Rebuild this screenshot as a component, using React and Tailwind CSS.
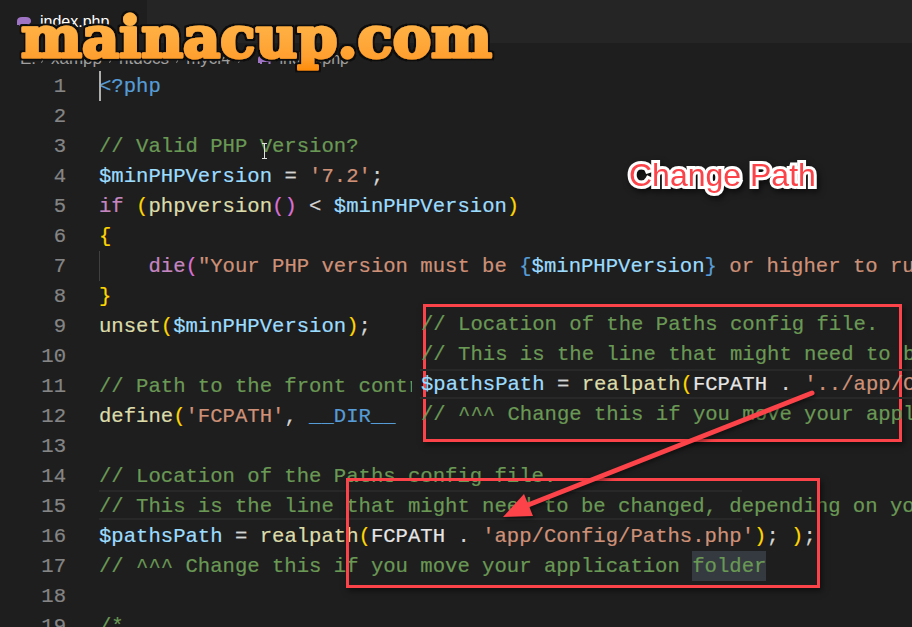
import { ChevronRight } from 'lucide-react';

const COMMENT = 'text-[#6a9955]';
const VAR = 'text-[#9cdcfe]';
const FN = 'text-[#dcdcaa]';
const STR = 'text-[#ce9178]';
const PLAIN = 'text-[#d4d4d4]';
const GOLD = 'text-[#ffd700]';
const ORCHID = 'text-[#da70d6]';
const TAG = 'text-[#569cd6]';
const KEY = 'text-[#c586c0]';
const CONST = 'text-[#e6e6e6]';

const lines = [
  [['<?php', TAG]],
  [],
  [['// Valid PHP Version?', COMMENT]],
  [['$minPHPVersion', VAR], [' = ', PLAIN], ["'7.2'", STR], [';', PLAIN]],
  [['if', KEY], [' ', PLAIN], ['(', GOLD], ['phpversion', FN], ['()', ORCHID], [' < ', PLAIN], ['$minPHPVersion', VAR], [')', GOLD]],
  [['{', GOLD]],
  [['    ', PLAIN], ['die', KEY], ['(', ORCHID], ['"Your PHP version must be ', STR], ['{', TAG], ['$minPHPVersion', VAR], ['}', TAG], [' or higher to run', STR]],
  [['}', GOLD]],
  [['unset', FN], ['(', GOLD], ['$minPHPVersion', VAR], [')', GOLD], [';', PLAIN]],
  [],
  [['// Path to the front controller', COMMENT]],
  [['define', FN], ['(', GOLD], ["'FCPATH'", STR], [', ', PLAIN], ['__DIR__', TAG]],
  [],
  [['// Location of the Paths config file.', COMMENT]],
  [['// This is the line that might need to be changed, depending on your', COMMENT]],
  [['$pathsPath', VAR], [' = ', PLAIN], ['realpath', FN], ['(', GOLD], ['FCPATH', CONST], [' . ', PLAIN], ["'app/Config/Paths.php'", STR], [')', GOLD], ['; ', PLAIN], [')', GOLD], [';', PLAIN]],
  [['// ^^^ Change this if you move your application ', COMMENT], ['folder', `${COMMENT} inline-block h-[30px] bg-[#343a40]`]],
  [],
  [['/*', COMMENT]],
];

const pasted = [
  [['// Location of the Paths config file.', COMMENT]],
  [['// This is the line that might need to be changed', COMMENT]],
  [['$pathsPath', VAR], [' = ', PLAIN], ['realpath', FN], ['(', GOLD], ['FCPATH', CONST], [' . ', PLAIN], ["'../app/Config", STR]],
  [['// ^^^ Change this if you move your application', COMMENT]],
];

function Code({ parts }) {
  return (
    <span className="whitespace-pre">
      {parts.map(([text, color], i) => (
        <span key={i} className={color}>{text}</span>
      ))}
    </span>
  );
}

function ElephantIcon({ className }) {
  return (
    <svg viewBox="0 0 16 11" className={className} fill="#a074c4">
      <path d="M1 9V5C1 2.500 3 1 6 1h4c3 0 5 1.500 5 4 0 1.500-.6 2.500-1.500 2.500V10h-2V8H5v2H3V9z" />
    </svg>
  );
}

function Crumb() {
  return <ChevronRight className="w-[7px] h-[14px] shrink-0 text-[#a0a0a0]" preserveAspectRatio="none" />;
}

function Logo() {
  return (
    <svg viewBox="0 0 500 80" className="absolute left-0 top-0 w-[500px] h-[80px]">
      <defs>
        <linearGradient id="logoFill" gradientUnits="userSpaceOnUse" x1="0" y1="22" x2="0" y2="72">
          <stop offset="0" stopColor="#ffb347" />
          <stop offset="0.7" stopColor="#ffa030" />
          <stop offset="1" stopColor="#ff8a08" />
        </linearGradient>
        <filter id="logoOutline" x="-5%" y="-20%" width="110%" height="140%">
          <feMorphology in="SourceAlpha" operator="dilate" radius="2.2" result="fat" />
          <feFlood floodColor="#111111" />
          <feComposite in2="fat" operator="in" result="edge" />
          <feMerge>
            <feMergeNode in="edge" />
            <feMergeNode in="SourceGraphic" />
          </feMerge>
        </filter>
      </defs>
      <text
        x="21"
        y="57"
        textLength="471"
        lengthAdjust="spacingAndGlyphs"
        fill="url(#logoFill)"
        stroke="url(#logoFill)"
        strokeWidth="3"
        strokeLinejoin="round"
        filter="url(#logoOutline)"
        fontFamily="'DejaVu Serif', serif"
        fontWeight="900"
        fontSize="56"
      >
        mainacup.com
      </text>
    </svg>
  );
}

export default function App() {
  return (
    <div className="relative w-[912px] h-[627px] overflow-hidden bg-[#1e1e1e] font-['Liberation_Mono',monospace]">
      {/* Tab bar */}
      <div className="flex h-[43px] bg-[#252526]">
        <div className="flex items-center gap-2 w-[147px] pl-4 bg-[#1e1e1e] font-['Liberation_Sans',sans-serif] text-[16px] text-white">
          <ElephantIcon className="w-4 h-[11px]" />
          <span>index.php</span>
          <span className="ml-3 text-[#cccccc]">×</span>
        </div>
      </div>

      {/* Breadcrumbs */}
      <div className="flex items-center gap-[5px] h-[28px] pl-5 pt-[4px] font-['Liberation_Sans',sans-serif] text-[17px] text-[#a0a0a0]">
        <span className="w-[14px]">E:</span>
        <Crumb />
        <span>xampp</span>
        <Crumb />
        <span>htdocs</span>
        <Crumb />
        <span>myci4</span>
        <Crumb />
        <ElephantIcon className="ml-[9px] w-4 h-[11px]" />
        <span className="ml-[2px] text-[16px]">index.php</span>
      </div>

      {/* Editor */}
      <div className="text-[20.6px] leading-[32px] [-webkit-text-stroke:0.2px]">
        {lines.map((parts, i) => (
          <div key={i} className="flex h-[30px]">
            <span className="w-[66px] shrink-0 text-right text-[#858585]">{i + 1}</span>
            {i === 14 ? (
              <span className="ml-[33px] -mt-px h-[30px] w-[643px] shrink-0 border-y-2 border-[#282828] leading-[30px]">
                <Code parts={parts} />
              </span>
            ) : (
              <span className="ml-[33px] flex-1">
                <Code parts={parts} />
              </span>
            )}
          </div>
        ))}
      </div>

      {/* Caret, indent guide */}
      <div className="absolute left-[99px] top-[71px] w-[2px] h-[30px] bg-[#aeafad]" />
      <div className="absolute left-[99px] top-[251px] w-px h-[30px] bg-[#404040]" />

      {/* Mouse pointer */}
      <svg viewBox="0 0 7 16" className="absolute left-[261px] top-[143px] w-[7px] h-[16px]" fill="none" stroke="#e0e0e0" strokeWidth="1">
        <path d="M1 .5h5M3.500 .5v15M1 15.500h5" />
      </svg>

      {/* Pasted snippet */}
      <div className="absolute left-[412px] top-[307px] w-[500px] h-[132px] bg-[#1e1e1e]">
        <div className="absolute left-[11px] -top-[3px] w-[479px] h-[138px] border-[3px] border-[#fc4349] shadow-[2px_3px_6px_rgba(0,0,0,0.5)]" />
        <div className="relative pt-[2px] text-[20.6px] leading-[32px] [-webkit-text-stroke:0.2px]">
          {pasted.map((parts, i) => (
            <div key={i} className={`h-[30px] pl-[9px] ${i === 2 ? 'border-y-2 border-[#282828] leading-[28px] ml-[8px] pl-px' : ''}`}>
              <Code parts={parts} />
            </div>
          ))}
        </div>
      </div>

      {/* Lower highlight box */}
      <div className="absolute left-[346px] top-[478px] w-[474px] h-[110px] border-[3px] border-[#fc4349] shadow-[2px_3px_6px_rgba(0,0,0,0.5)]" />

      {/* Arrow */}
      <svg viewBox="0 0 912 627" className="absolute inset-0 w-[912px] h-[627px] drop-shadow-[1px_2px_2px_rgba(0,0,0,0.5)]">
        <path d="M812 393 L528 505" stroke="#fc4349" strokeWidth="5" strokeLinecap="round" fill="none" />
        <path d="M503 517 L524 494 L533 516 Z" fill="#fc4349" />
      </svg>

      {/* Callout */}
      <div className="absolute left-[629px] top-[156px] font-['Liberation_Sans',sans-serif] text-[32px] leading-[38px] whitespace-nowrap text-[#fc4349] [-webkit-text-stroke:6px_#ffffff] [paint-order:stroke_fill] drop-shadow-[2px_3px_3px_rgba(0,0,0,0.6)]">
        Change Path
      </div>

      <Logo />
    </div>
  );
}
